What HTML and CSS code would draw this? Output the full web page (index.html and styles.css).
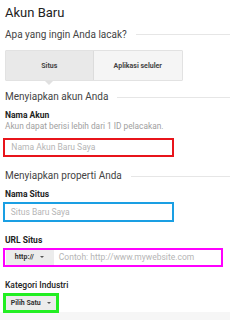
FILE: index.html
```html
<!DOCTYPE html>
<html>
<head>
<meta charset="utf-8">
<link rel="stylesheet" href="styles.css">
</head>
<body>
<div class="page">
  <h1 class="title">Akun Baru</h1>
  <div class="section q">Apa yang ingin Anda lacak?</div>
  <div class="tabs">
    <div class="tab active">Situs</div>
    <div class="tab">Aplikasi seluler</div>
  </div>
  <div class="section s1">Menyiapkan akun Anda</div>
  <div class="label l1">Nama Akun</div>
  <div class="help">Akun dapat berisi lebih dari 1 ID pelacakan.</div>
  <div class="input red"><span class="ph">Nama Akun Baru Saya</span></div>
  <div class="section s2">Menyiapkan properti Anda</div>
  <div class="label l2">Nama Situs</div>
  <div class="input blue"><span class="ph">Situs Baru Saya</span></div>
  <div class="label l3">URL Situs</div>
  <div class="input magenta">
    <div class="btn proto">http:// <span class="caret"></span></div>
    <span class="ph url">Contoh: http://www.mywebsite.com</span>
  </div>
  <div class="label l4">Kategori Industri</div>
  <div class="pick">
    <div class="btn choose">Pilih Satu <span class="caret"></span></div>
  </div>
</div>
<div class="band"></div>
</body>
</html>
```
FILE: styles.css
```css
html, body {
  margin: 0;
  padding: 0;
  background: #ffffff;
  overflow: hidden;
}
body {
  font-family: Roboto, "Liberation Sans", sans-serif;
  color: #333;
  width: 230px;
  height: 320px;
  position: relative;
}
.page {
  padding: 4.5px 0 0 5px;
}
.title {
  margin: 0;
  font-size: 13px;
  line-height: 16px;
  font-weight: 400;
  color: #222;
}
.section {
  display: flex;
  align-items: center;
  gap: 9px;
  font-size: 10px;
  line-height: 12px;
  color: #444;
}
.section::after {
  content: "";
  flex: 1;
  height: 1px;
  background: #e6e6e6;
}
.q { margin-top: 8px; }
.tabs {
  margin-top: 9.5px;
  width: 178px;
  height: 31px;
  display: flex;
  border: 1px solid #e2e2e2;
  box-sizing: border-box;
  border-radius: 1px;
  margin-left: -0.5px;
}
.tab {
  flex: 1;
  display: flex;
  align-items: center;
  justify-content: center;
  font-size: 7px;
  font-weight: 700;
  color: #444;
  background: #f5f5f5;
  position: relative;
}
.tab.active {
  background: #e9e9e9;
  border-right: 1px solid #dcdcdc;
}
.tab.active::after {
  content: "";
  position: absolute;
  left: 50%;
  bottom: -5px;
  margin-left: -4px;
  border-left: 4px solid transparent;
  border-right: 4px solid transparent;
  border-top: 4px solid #e0e0e0;
}
.s1 { margin-top: 10px; }
.label {
  font-size: 8.5px;
  line-height: 10px;
  font-weight: 700;
  color: #222;
}
.l1 { margin-top: 6.7px; }
.help {
  margin-top: 1.3px;
  font-size: 8.3px;
  line-height: 10px;
  color: #a0a0a0;
}
.input {
  margin-left: -1.7px;
  box-sizing: border-box;
  display: flex;
  align-items: center;
}
.ph {
  font-size: 8.5px;
  color: #b5b5b5;
}
.red {
  margin-top: 6.7px;
  width: 171px;
  height: 19px;
  border: 2px solid #e8141b;
  padding-left: 6px;
}
.s2 { margin-top: 13.6px; }
.l2 { margin-top: 6.4px; }
.blue {
  margin-top: 3px;
  width: 171px;
  height: 20.5px;
  border: 2.5px solid #1a9fe3;
  padding-left: 5.5px;
}
.l3 { margin-top: 13px; }
.magenta {
  margin-top: 3px;
  width: 219.5px;
  height: 18.5px;
  border: 2.5px solid #ff00ff;
  padding-left: 0.5px;
  gap: 5px;
}
.btn {
  display: flex;
  align-items: center;
  font-size: 7px;
  font-weight: 700;
  color: #333;
  background: #ececec;
  height: 100%;
  box-sizing: border-box;
}
.proto {
  width: 48px;
  padding-left: 9px;
  gap: 6px;
}
.caret {
  width: 0;
  height: 0;
  border-left: 2.5px solid transparent;
  border-right: 2.5px solid transparent;
  border-top: 2.5px solid #555;
}
.url { font-size: 8.5px; }
.l4 {
  margin-top: 13.3px;
  font-weight: 500;
}
.pick {
  margin-top: 2.7px;
  margin-left: -2.3px;
  width: 56.5px;
  height: 20px;
  border: 3px solid #22ee22;
  box-sizing: border-box;
  position: relative;
  z-index: 1;
  background: #fff;
}
.choose {
  padding-left: 5px;
  gap: 6px;
}
.band {
  position: absolute;
  left: 0;
  right: 0;
  top: 312px;
  bottom: 0;
  background: #f6f6f6;
}
```
